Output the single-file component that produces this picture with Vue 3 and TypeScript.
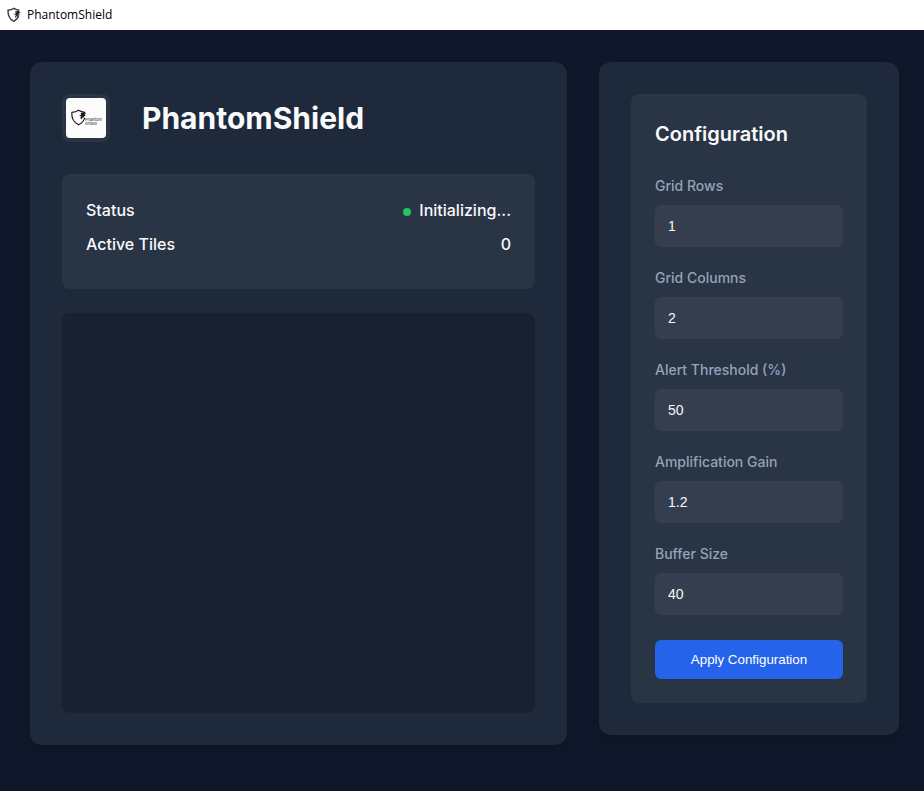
<script setup lang="ts">
import { reactive, ref } from 'vue'

interface Field {
  id: string
  label: string
  value: string
}

const status = ref('Initializing...')
const activeTiles = ref(0)
const fields = reactive<Field[]>([
  { id: 'rows', label: 'Grid Rows', value: '1' },
  { id: 'columns', label: 'Grid Columns', value: '2' },
  { id: 'threshold', label: 'Alert Threshold (%)', value: '50' },
  { id: 'gain', label: 'Amplification Gain', value: '1.2' },
  { id: 'buffer', label: 'Buffer Size', value: '40' },
])

function applyConfiguration(): void {
  const rows = Number(fields[0].value)
  const columns = Number(fields[1].value)
  if (rows > 0 && columns > 0) {
    activeTiles.value = rows * columns
  }
}
</script>

<template>
  <div class="window">
    <header class="titlebar">
      <svg class="titlebar-icon" viewBox="0 0 16 16" aria-hidden="true">
        <path d="M13.4 3.2C11.2 3 9.6 2.4 8 1.4C6.2 2.5 4 3.1 2 3.2C1.8 8.4 3.6 12.2 7.8 14.4C10.6 12.8 12.2 10.8 12.8 8.4" fill="none" stroke="#3a3a3a" stroke-width="1.4" />
        <path d="M9 4.6L13.6 3.4L13 4.8L14.8 5.4L12.8 6.4L13.8 7.4L11.8 8L12.4 9.4L10.6 9L10 11.4L9 9.2L10 7.8L7.4 7.2L9.8 6.2Z" fill="#2b2b2b" />
      </svg>
      <span>PhantomShield</span>
    </header>

    <main class="layout">
      <section class="panel monitor">
        <div class="brand">
          <div class="logo">
            <svg viewBox="0 0 40 40" role="img" aria-label="Phantom Shield logo">
              <path d="M18.8 14.2C16.6 14 14.5 13.3 12.6 12.2C10.6 13.5 8.3 14.2 5.8 14.4C5.4 20 7.6 24.5 12.6 26.8C16 25 18 22.8 18.6 19.8" fill="none" stroke="#161616" stroke-width="1.1" />
              <path d="M14.4 15L19.8 13.8L18.8 15.2L20.4 15.8L18.4 16.6L19.8 17.6L17.8 18.2L18.4 19.6L16.4 19.4L15.4 21.6L14.2 19.4L15.4 18.2L13.2 17.8L15.4 16.4Z" fill="#161616" />
              <text x="19" y="23.4">Phantom</text>
              <text x="19" y="27">Shield</text>
            </svg>
          </div>
          <h1>PhantomShield</h1>
        </div>

        <dl class="stats">
          <div class="stat">
            <dt>Status</dt>
            <dd><span class="dot"></span>{{ status }}</dd>
          </div>
          <div class="stat">
            <dt>Active Tiles</dt>
            <dd>{{ activeTiles }}</dd>
          </div>
        </dl>

        <div class="viewport"></div>
      </section>

      <aside class="panel">
        <form class="config" @submit.prevent="applyConfiguration">
          <h2>Configuration</h2>
          <div class="fields">
            <div v-for="field in fields" :key="field.id" class="field">
              <label :for="field.id">{{ field.label }}</label>
              <input :id="field.id" v-model="field.value" type="text" inputmode="decimal" />
            </div>
          </div>
          <button type="submit">Apply Configuration</button>
        </form>
      </aside>
    </main>
  </div>
</template>

<style>
body {
  margin: 0;
  background: #0f172a;
}
</style>

<style scoped>
.window {
  min-height: 100vh;
  background: #0f172a;
  color: #f8fafc;
  font-family: Inter, "Liberation Sans", sans-serif;
}

.titlebar {
  display: flex;
  align-items: center;
  gap: 5px;
  height: 30px;
  padding: 0 6px;
  background: #ffffff;
  color: #000000;
  font-family: "Open Sans", "Noto Sans", sans-serif;
  font-size: 12px;
  line-height: 16px;
}

.titlebar-icon {
  width: 16px;
  height: 16px;
}

.layout {
  display: grid;
  grid-template-columns: minmax(0, 1fr) 300px;
  align-items: start;
  gap: 32px;
  padding: 32px 25px 32px 30px;
}

.panel {
  padding: 32px;
  border-radius: 12px;
  background: #1e293b;
  box-shadow: 0 4px 6px rgba(0, 0, 0, 0.1);
}

.brand {
  display: flex;
  align-items: center;
  gap: 32px;
  margin-bottom: 32px;
}

.logo {
  display: flex;
  padding: 4px;
  border-radius: 8px;
  background: #293445;
}

.logo svg {
  width: 40px;
  height: 40px;
  border-radius: 4px;
  background: #fcfcfc;
}

.logo text {
  fill: #161616;
  font-size: 4px;
  font-weight: 400;
}

h1 {
  margin: 0;
  font-size: 30px;
  font-weight: 700;
  line-height: 48px;
}

.stats {
  display: flex;
  flex-direction: column;
  gap: 10px;
  margin: 0 0 24px;
  padding: 24px 24px 33px;
  border-radius: 8px;
  background: #293445;
}

.stat {
  display: flex;
  justify-content: space-between;
  font-size: 16px;
  font-weight: 500;
  line-height: 24px;
}

.stat dd {
  margin: 0;
}

.dot {
  display: inline-block;
  width: 8px;
  height: 8px;
  margin-right: 8px;
  border-radius: 50%;
  background: #22c55e;
}

.viewport {
  height: 400px;
  border-radius: 8px;
  background: #18212f;
}

.config {
  padding: 24px;
  border-radius: 8px;
  background: #293445;
}

h2 {
  margin: 0 0 25px;
  font-size: 20px;
  font-weight: 600;
  line-height: 32px;
}

.fields {
  display: grid;
  gap: 20px;
  margin-bottom: 25px;
}

.field {
  display: grid;
  gap: 8px;
}

label {
  color: #94a3b8;
  font-size: 14px;
  font-weight: 500;
  line-height: 22px;
}

input {
  box-sizing: border-box;
  width: 100%;
  height: 42px;
  padding: 0 12px;
  border: 1px solid #344050;
  border-radius: 6px;
  background: #353e4e;
  color: #f8fafc;
  font-family: "Liberation Sans", Arial, sans-serif;
  font-size: 14px;
}

button {
  display: block;
  width: 100%;
  height: 39px;
  border: 0;
  border-radius: 6px;
  background: #2563eb;
  color: #ffffff;
  font-family: "Liberation Sans", Arial, sans-serif;
  font-weight: 500;
  cursor: pointer;
}
</style>
